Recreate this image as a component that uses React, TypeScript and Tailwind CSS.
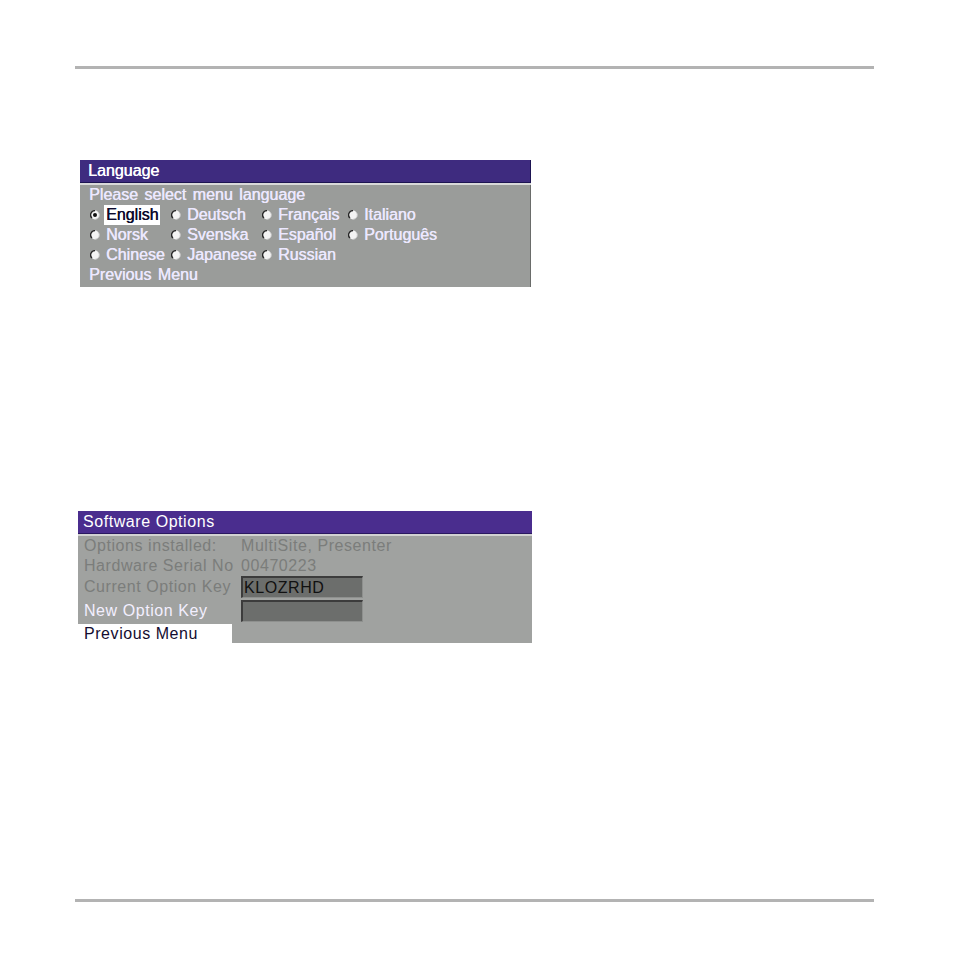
import React from "react";

const font = { fontFamily: '"Liberation Sans", Arial, sans-serif' };

function Radio({ checked }: { checked?: boolean }) {
  return (
    <svg width="10" height="10" viewBox="0 0 10 10" className="shrink-0">
      <circle cx="5" cy="5" r="4.4" fill="#f4f4f4" />
      <path d="M5 0.6 A4.4 4.4 0 0 0 1.9 8.1" fill="none" stroke="#262626" strokeWidth="1.4" />
      <path d="M8.1 1.9 A4.4 4.4 0 0 1 5 9.4" fill="none" stroke="#c4c4c4" strokeWidth="0.9" />
      {checked && <circle cx="5" cy="5" r="2" fill="#111" />}
    </svg>
  );
}

type Lang = { name: string; checked?: boolean };

const rows: Lang[][] = [
  [{ name: "English", checked: true }, { name: "Deutsch" }, { name: "Français" }, { name: "Italiano" }],
  [{ name: "Norsk" }, { name: "Svenska" }, { name: "Español" }, { name: "Português" }],
  [{ name: "Chinese" }, { name: "Japanese" }, { name: "Russian" }],
];

function LanguageMenu() {
  return (
    <div
      className="ml-[80px] w-[451px] text-[16px] tracking-normal [word-spacing:2px] [text-shadow:0.4px_0_0_currentColor]"
      style={font}
    >
      <div className="h-[23px] bg-[#3e2b7f] border-b border-r border-[#1d1452] pl-[8px] leading-[22px] text-white">
        Language
      </div>
      <div className="h-[2px] bg-[#d9d9d9]" />
      <div className="bg-[#9a9c9a] border-r border-[#6a6c6a] pl-[10px] pb-[2px] text-[#ece8ff]">
        <div className="h-[20px] leading-[20px] -ml-[1px]">Please select menu language</div>
        {rows.map((row, i) => (
          <div key={i} className="grid grid-cols-[81px_91px_86px_auto] h-[20px]">
            {row.map((l) => (
              <div key={l.name} className="flex items-center gap-[6px]">
                <Radio checked={l.checked} />
                <span
                  className={
                    l.checked
                      ? "bg-white text-[#0c0a2c] px-[2px] -ml-[2px] leading-[20px]"
                      : "leading-[20px]"
                  }
                >
                  {l.name}
                </span>
              </div>
            ))}
          </div>
        ))}
        <div className="h-[20px] leading-[20px] -ml-[1px]">Previous Menu</div>
      </div>
    </div>
  );
}

function KeyBox({ value }: { value?: string }) {
  return (
    <div className="w-[122px] h-[22px] bg-[#6c6e6c] border-t-2 border-l-2 border-[#3c3c3c] border-b border-r border-b-[#8e908e] border-r-[#8e908e] pl-[1px] leading-[19px] text-[#111111]">
      {value}
    </div>
  );
}

function SoftwareOptions() {
  return (
    <div className="ml-[78px] w-[454px] text-[16px] tracking-[0.035em]" style={font}>
      <div className="h-[23px] bg-[#4a2d8e] border-b border-[#2a1860] pl-[5px] leading-[22px] text-white">
        Software Options
      </div>
      <div className="h-[2px] bg-[#d2d2d2]" />
      <div className="bg-[#a0a2a0] flex flex-col">
        <div className="flex h-[20px] leading-[20px] text-[#7b7d7b]">
          <span className="w-[163px] pl-[6px]">Options installed:</span>
          <span>MultiSite, Presenter</span>
        </div>
        <div className="flex h-[20px] leading-[20px] text-[#7b7d7b]">
          <span className="w-[163px] pl-[6px]">Hardware Serial No</span>
          <span>00470223</span>
        </div>
        <div className="flex items-center h-[22px]">
          <span className="w-[163px] pl-[6px] text-[#7b7d7b]">Current Option Key</span>
          <KeyBox value="KLOZRHD" />
        </div>
        <div className="flex items-center h-[22px] mt-[2px]">
          <span className="w-[163px] pl-[6px] text-[#f3efff]">New Option Key</span>
          <KeyBox />
        </div>
        <div className="h-[19px] mt-[2px]">
          <div className="w-[154px] h-[19px] bg-white pl-[6px] leading-[19px] text-[#140c30]">Previous Menu</div>
        </div>
      </div>
    </div>
  );
}

export default function App() {
  return (
    <div className="w-[954px] h-[954px] bg-white flex flex-col">
      <div className="mt-[66px] ml-[75px] w-[799px] h-[3px] bg-[#b3b3b3]" />
      <div className="mt-[91px]">
        <LanguageMenu />
      </div>
      <div className="mt-[224px]">
        <SoftwareOptions />
      </div>
      <div className="mt-[256px] ml-[75px] w-[799px] h-[3px] bg-[#b3b3b3]" />
    </div>
  );
}
